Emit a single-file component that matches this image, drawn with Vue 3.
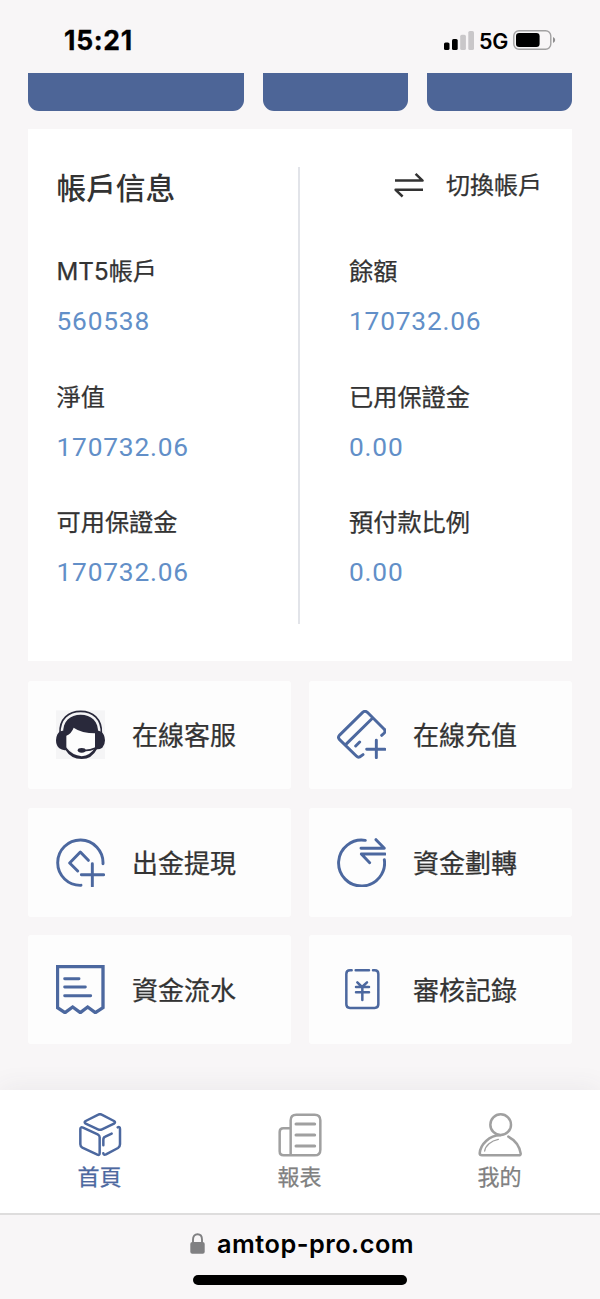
<script setup>
const columns = [
  [
    { label: 'MT5帳戶', value: '560538' },
    { label: '淨值', value: '170732.06' },
    { label: '可用保證金', value: '170732.06' }
  ],
  [
    { label: '餘額', value: '170732.06' },
    { label: '已用保證金', value: '0.00' },
    { label: '預付款比例', value: '0.00' }
  ]
]
</script>

<template>
  <div class="phone">
    <header class="status">
      <span class="time">15:21</span>
      <div class="signals">
        <svg class="bars" width="30" height="19" viewBox="0 0 30 19">
          <rect x="0" y="11.5" width="5.5" height="7.5" rx="1.6" />
          <rect x="8" y="8" width="5.7" height="11" rx="1.6" />
          <rect x="16.2" y="3.7" width="5.7" height="15.3" rx="1.6" fill="#c9c7c9" />
          <rect x="24.3" y="0" width="5.7" height="19" rx="1.6" fill="#c9c7c9" />
        </svg>
        <span class="net">5G</span>
        <svg class="battery" width="43" height="20" viewBox="0 0 43 20">
          <rect x="0.8" y="0.8" width="37" height="18.4" rx="5.2" fill="none" stroke="#a2a1a2" stroke-width="1.4" />
          <rect x="3" y="3" width="23.6" height="14" rx="3.2" />
          <path d="M40 7q2.2 1 2.2 3T40 13z" fill="#8f8e8f" />
        </svg>
      </div>
    </header>

    <div class="banners"><i></i><i></i><i></i></div>

    <section class="account">
      <div class="col">
        <h1>帳戶信息</h1>
        <div v-for="f in columns[0]" :key="f.label" class="field">
          <div class="label">{{ f.label }}</div>
          <div class="value">{{ f.value }}</div>
        </div>
      </div>
      <div class="col right">
        <div class="switch">
          <svg width="30" height="26" viewBox="0 0 30 26" fill="none" stroke="#333" stroke-width="2.5" stroke-linejoin="round">
            <path d="M1 8.6h27.6L21.6 1.8M29 17.8H1.6l7 6.7" />
          </svg>
          <span>切換帳戶</span>
        </div>
        <div v-for="f in columns[1]" :key="f.label" class="field">
          <div class="label">{{ f.label }}</div>
          <div class="value">{{ f.value }}</div>
        </div>
      </div>
    </section>

    <section class="tiles">
      <div class="tile">
        <svg class="ico" viewBox="48 60 147 147">
          <rect x="48" y="61" width="147" height="147" fill="#f5f5f6" />
          <path d="M79 130L98 114Q120 130 166 131L167 168Q150 197 125 198Q96 195 79 163z" fill="#fdfdfd" />
          <path d="M60 130C58 87 86 64 122 64S186 87 184 130" fill="none" stroke="#29293b" stroke-width="5" />
          <path d="M70 132C67 93 91 74 122 74S177 93 174 132L167 130Q125 130 101 113Q95 130 79 137z" fill="#29293b" />
          <path d="M79 122V180Q67 182 58 175Q48 166 48 151Q49 130 62 124Q70 120 79 122zM165 122V177Q177 180 187 173Q195 164 195 151Q194 131 183 125Q174 120 165 122z" fill="#29293b" />
          <path d="M78 172Q96 196 125 199Q151 196 165 173L171 177Q156 207 125 207Q93 207 76 179z" fill="#29293b" />
          <path d="M120 181Q148 184 167 174" fill="none" stroke="#29293b" stroke-width="5" />
          <ellipse cx="125" cy="181" rx="12" ry="7" fill="#29293b" />
        </svg>
        <span>在線客服</span>
      </div>
      <div class="tile">
        <svg class="ico line" viewBox="51 60 147 147">
          <path d="M129 194L119 201Q114 203 109 198L58 148Q53 142 58 136L128 67Q135 61 142 67L192 117Q198 122 193 129L185 136M155 87L80 161M107 168L119 156M140 178H195M169 151V203" />
        </svg>
        <span>在線充值</span>
      </div>
      <div class="tile">
        <svg class="ico line" viewBox="48 51 147 147">
          <path d="M123 193A68 68 0 1 1 189 128M113 150L89 126L121 93L145 118M124 161H191M157 128V196" />
        </svg>
        <span>出金提現</span>
      </div>
      <div class="tile">
        <svg class="ico line" viewBox="51 51 147 147">
          <path d="M136 58A69 69 0 1 0 193 116M123 82H193L168 56M195 99H124L149 125" />
        </svg>
        <span>資金劃轉</span>
      </div>
      <div class="tile">
        <svg class="ico line" viewBox="48 60 147 147">
          <path class="thick" d="M52.500 65H189V188L166 203L143 186L121 203L98 186L75 203L52.500 188Z" />
          <path d="M74 101H117M74 126H136M74 152H152" />
        </svg>
        <span>資金流水</span>
      </div>
      <div class="tile">
        <svg class="ico line thin" viewBox="51 60 147 147">
          <path d="M95 76H90Q79 76 79 87V178Q79 189 90 189H164Q175 189 175 178V87Q175 76 164 76H159M107 76H147M112 112L126 126L141 112M108 126H147M108 142H147M127 126V165" />
        </svg>
        <span>審核記錄</span>
      </div>
    </section>

    <nav class="tabs">
      <div class="tab active">
        <svg viewBox="0 0 132 132" class="tabico">
          <path d="M61 5Q66 2 71 5L108 24Q114 28 108 32L72 49Q66 52 60 49L23 32Q17 28 23 24ZM15 44L59 64Q65 67 65 73V120Q65 128 58 125L13 104Q7 101 7 94V48Q7 41 15 44ZM119 43Q126 40 126 48V94Q126 101 120 105L84 124Q77 127 76 121M76 97V80Q76 73 82 71L101 62" />
        </svg>
        <span>首頁</span>
      </div>
      <div class="tab">
        <svg viewBox="0 0 132 132" class="tabico">
          <path d="M38 127V22Q38 5 55 5H110Q127 5 127 22V110Q127 127 110 127H17Q5 127 5 115V57Q5 46 16 46H38" />
          <path d="M54 33H110M54 66H110M54 99H110" stroke-width="9" />
        </svg>
        <span>報表</span>
      </div>
      <div class="tab">
        <svg viewBox="0 0 132 132" class="tabico">
          <circle cx="68" cy="35" r="31" />
          <path d="M67 67C34 67 7 94 5 121Q5 127 12 127H122Q129 127 128 121C124 98 110 81 91 71" />
          <path d="M61 79C39 83 22 98 20 114" stroke-width="4" />
        </svg>
        <span>我的</span>
      </div>
    </nav>

    <footer class="browser">
      <div class="url">
        <svg width="15" height="21" viewBox="0 0 15 21">
          <path d="M3 10V6.500C3 3.300 4.800 1.200 7.500 1.200S12 3.300 12 6.500V10" fill="none" stroke="#808082" stroke-width="1.900" />
          <rect x="0.300" y="9" width="14.400" height="11.800" rx="2" fill="#808082" />
        </svg>
        <span>amtop-pro.com</span>
      </div>
      <div class="home"></div>
    </footer>
  </div>
</template>

<style>
body { margin: 0; background: #f8f6f7; }
</style>

<style scoped>
* { box-sizing: border-box; }
.phone {
  width: 600px; height: 1299px; overflow: hidden;
  display: flex; flex-direction: column;
  background: #f8f6f7; color: #333;
  font-family: Inter, "Noto Sans CJK TC", sans-serif;
}
svg { display: block; flex: none; }
.status {
  height: 73px; flex: none; display: flex; justify-content: space-between;
  padding: 26px 44px 0 64px; color: #000;
}
.time { font-size: 26.500px; line-height: 29px; font-weight: 700; letter-spacing: 0.7px; -webkit-text-stroke: 0.3px #000; }
.signals { display: flex; align-items: flex-start; }
.bars { margin-top: 4.500px; }
.net {
  font-size: 21.500px; line-height: 30px; font-weight: 600;
  margin: 0 5px 0 5px; width: 29px; letter-spacing: -0.3px; white-space: nowrap;
}
.battery { margin-top: 4px; }
.banners {
  height: 37.500px; flex: none; padding: 0 28px;
  display: grid; grid-template-columns: 215.700px 145.700px 145px; justify-content: space-between;
}
.banners i { background: #4d6597; border-radius: 0 0 11px 11px; }
.account {
  margin: 18.500px 28px 0; height: 532px; flex: none; background: #fff;
  display: flex; padding: 38px 0;
}
.col { width: 272px; height: 457px; padding-left: 28.500px; border-right: 2px solid #e2e4e9; }
.right { padding-left: 49px; border: 0; }
h1 { margin: 0; font-size: 29.700px; line-height: 43px; height: 84px; font-weight: 500; white-space: nowrap; }
.switch {
  height: 84px; display: flex; gap: 22px; padding: 5px 0 0 45px; font-size: 24px;
  -webkit-text-stroke: 0.25px #333;
}
.switch span { line-height: 27px; white-space: nowrap; }
.field { height: 125.600px; white-space: nowrap; }
.label { font-size: 24.200px; line-height: 41px; -webkit-text-stroke: 0.25px #333; }
.value {
  margin-top: 9px; font-family: Roboto, "Liberation Sans", sans-serif;
  font-size: 26.300px; line-height: 40px; letter-spacing: 0.8px; color: #628fc8;
}
.tiles {
  margin: 19.500px 28px 0; flex: none;
  display: grid; grid-template-columns: 262.500px 263px; grid-auto-rows: 108.700px; gap: 18.700px 18.500px;
}
.tile {
  background: #fdfdfd; border-radius: 3px; display: flex; align-items: center;
  gap: 27px; padding-left: 28px; font-size: 26px; line-height: 40px;
}
.tile span { padding-top: 3px; -webkit-text-stroke: 0.25px #333; }
.ico { width: 49px; height: 49px; }
.line { fill: none; stroke: #4c689f; stroke-width: 8.800; stroke-linecap: round; stroke-linejoin: round; }
.thick { stroke-width: 10; stroke-linejoin: miter; }
.thin { stroke-width: 7.500; }
.tabs {
  margin-top: auto; height: 123px; flex: none; background: #fff;
  display: grid; grid-template-columns: repeat(3, 200px);
  box-shadow: 0 -3px 24px rgba(70, 75, 80, 0.07);
}
.tab {
  display: flex; flex-direction: column; align-items: center; padding-top: 23px;
  color: #808080; font-size: 22px; line-height: 32px; gap: 4px;
}
.tab span { padding-right: 1px; -webkit-text-stroke: 0.25px currentColor; }
.tab.active { color: #4c689f; }
.tabico {
  width: 44px; height: 44px; fill: none; stroke: #a0a0a0; stroke-width: 7.500;
  stroke-linecap: round; stroke-linejoin: round;
}
.active .tabico { stroke: #4c689f; }
.browser { height: 86px; flex: none; border-top: 2px solid #dedddd; background: #f8f6f7; color: #000; }
.url {
  display: flex; gap: 12px; padding: 12px 0 0 190px;
  font-size: 25.300px; line-height: 34px; font-weight: 600; letter-spacing: 0.5px; white-space: nowrap;
}
.url svg { margin-top: 6px; }
.home { width: 214px; height: 10px; margin: 14px auto 0; border-radius: 5px; background: #000; }
</style>
